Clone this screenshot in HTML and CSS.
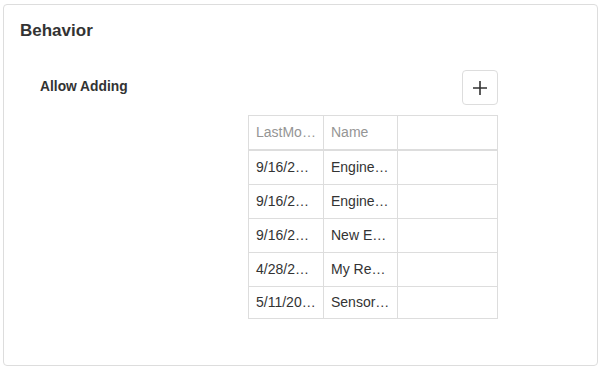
FILE: index.html
```html
<!DOCTYPE html>
<html>
<head>
<meta charset="utf-8">
<link rel="stylesheet" href="styles.css">
</head>
<body>
<div class="card">
  <div class="title">Behavior</div>
  <div class="field">
    <div class="label">Allow Adding</div>
    <div class="grid">
      <div class="toolbar">
        <button class="add-btn" type="button" aria-label="Add">
          <svg width="18" height="18" viewBox="0 0 18 18"><path d="M9 2v14M2 9h14" stroke="#333" stroke-width="1.6" fill="none"/></svg>
        </button>
      </div>
      <div class="table">
        <div class="row head">
          <div class="cell c1">LastModified</div>
          <div class="cell c2">Name</div>
          <div class="cell c3"></div>
        </div>
        <div class="row">
          <div class="cell c1">9/16/2021</div>
          <div class="cell c2">Engine Report</div>
          <div class="cell c3"></div>
        </div>
        <div class="row">
          <div class="cell c1">9/16/2021</div>
          <div class="cell c2">Engine Status</div>
          <div class="cell c3"></div>
        </div>
        <div class="row">
          <div class="cell c1">9/16/2021</div>
          <div class="cell c2">New Engine</div>
          <div class="cell c3"></div>
        </div>
        <div class="row">
          <div class="cell c1">4/28/2021</div>
          <div class="cell c2">My Report</div>
          <div class="cell c3"></div>
        </div>
        <div class="row last">
          <div class="cell c1">5/11/2021</div>
          <div class="cell c2">Sensor Data</div>
          <div class="cell c3"></div>
        </div>
      </div>
    </div>
  </div>
</div>
</body>
</html>
```

FILE: styles.css
```css
* { box-sizing: border-box; }
html, body { margin: 0; padding: 0; background: #fff; }
body {
  font-family: "Liberation Sans", Arial, sans-serif;
  color: #333;
  padding: 4px 0 0 3px;
}
.card {
  width: 595px;
  height: 362px;
  border: 1px solid #dddddd;
  border-radius: 4px;
  background: #fff;
}
.title {
  font-size: 17px;
  font-weight: bold;
  line-height: 20px;
  margin: 16px 0 0 16px;
  color: #333;
}
.field {
  display: flex;
  margin: 29px 0 0 36px;
}
.label {
  width: 208px;
  font-size: 13.8px;
  font-weight: bold;
  line-height: 16px;
  padding-top: 9px;
  color: #333;
}
.grid {
  width: 250px;
}
.toolbar {
  display: flex;
  justify-content: flex-end;
  height: 45px;
}
.add-btn {
  width: 36px;
  height: 35px;
  border: 1px solid #ddd;
  border-radius: 4px;
  background: #fff;
  padding: 0;
  display: flex;
  align-items: center;
  justify-content: center;
}
.table {
  border: 1px solid #ddd;
  width: 250px;
  font-size: 14px;
}
.row {
  display: flex;
  height: 34px;
  border-bottom: 1px solid #ddd;
}
.row.head {
  height: 35px;
  border-bottom: 2px solid #ddd;
  color: #959595;
}
.row.last {
  height: 31px;
  border-bottom: none;
}
.cell {
  white-space: nowrap;
  overflow: hidden;
  text-overflow: ellipsis;
  padding: 0 7px;
  display: block;
  line-height: 33px;
}
.row.last .cell { line-height: 31px; }
.c1 { width: 75px; border-right: 1px solid #ddd; }
.c2 { width: 74px; border-right: 1px solid #ddd; }
.c3 { flex: 1; }
```
